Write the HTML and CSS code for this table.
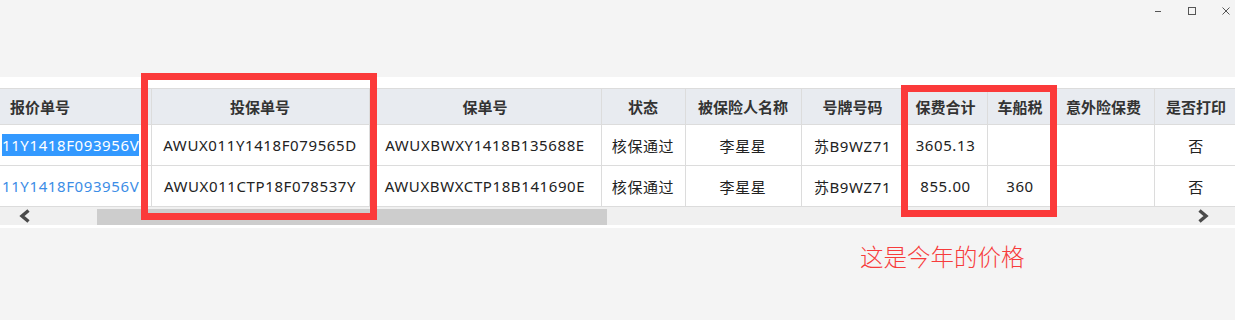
FILE: index.html
```html
<!DOCTYPE html>
<html lang="zh-CN">
<head>
    <meta charset="UTF-8">
    <title>保单查询</title>
    <link rel="stylesheet" href="styles.css">
</head>
<body>
    <!-- 窗口按钮 -->
    <div class="title-bar">
        <span class="win-btn">
            <svg width="10" height="10" viewBox="0 0 10 10"><line x1="2" y1="5.5" x2="8" y2="5.5" stroke="#555" stroke-width="1"/></svg>
        </span>
        <span class="win-btn">
            <svg width="10" height="10" viewBox="0 0 10 10"><rect x="1.5" y="1.5" width="7" height="7" fill="none" stroke="#555" stroke-width="1"/></svg>
        </span>
        <span class="win-btn">
            <svg width="10" height="10" viewBox="0 0 10 10"><path d="M1.5 1.5 L8.5 8.5 M8.5 1.5 L1.5 8.5" stroke="#555" stroke-width="1"/></svg>
        </span>
    </div>

    <!-- 表格区域 -->
    <div class="panel">
        <div class="grid-wrap">
            <table class="grid">
                <colgroup>
                    <col style="width:151px">
                    <col style="width:218px">
                    <col style="width:232px">
                    <col style="width:84px">
                    <col style="width:116px">
                    <col style="width:103px">
                    <col style="width:83px">
                    <col style="width:66px">
                    <col style="width:101px">
                    <col style="width:84px">
                </colgroup>
                <thead>
                    <tr>
                        <th class="left">报价单号</th>
                        <th>投保单号</th>
                        <th>保单号</th>
                        <th>状态</th>
                        <th>被保险人名称</th>
                        <th>号牌号码</th>
                        <th>保费合计</th>
                        <th>车船税</th>
                        <th>意外险保费</th>
                        <th>是否打印</th>
                    </tr>
                </thead>
                <tbody>
                    <tr>
                        <td class="left link"><span class="selected">11Y1418F093956V</span></td>
                        <td>AWUX011Y1418F079565D</td>
                        <td>AWUXBWXY1418B135688E</td>
                        <td>核保通过</td>
                        <td>李星星</td>
                        <td>苏B9WZ71</td>
                        <td>3605.13</td>
                        <td></td>
                        <td></td>
                        <td>否</td>
                    </tr>
                    <tr>
                        <td class="left link">11Y1418F093956V</td>
                        <td>AWUX011CTP18F078537Y</td>
                        <td>AWUXBWXCTP18B141690E</td>
                        <td>核保通过</td>
                        <td>李星星</td>
                        <td>苏B9WZ71</td>
                        <td>855.00</td>
                        <td>360</td>
                        <td></td>
                        <td>否</td>
                    </tr>
                </tbody>
            </table>
            <!-- 横向滚动条 -->
            <div class="hscroll">
                <span class="arrow arrow-left">
                    <svg width="14" height="14" viewBox="0 0 14 14"><path d="M10.5 1.5 L4 7 L10.5 12.5" fill="none" stroke="#4a4a4a" stroke-width="3.4"/></svg>
                </span>
                <div class="track"><div class="thumb"></div></div>
                <span class="arrow arrow-right">
                    <svg width="14" height="14" viewBox="0 0 14 14"><path d="M3.5 1.5 L10 7 L3.5 12.5" fill="none" stroke="#4a4a4a" stroke-width="3.4"/></svg>
                </span>
            </div>
        </div>
    </div>

    <p class="note">这是今年的价格</p>

    <!-- 标注框 -->
    <div class="mark mark-policy"></div>
    <div class="mark mark-fee"></div>
</body>
</html>
```

FILE: styles.css
```css
body {
    margin: 0;
    background-color: #f4f4f4;
    font-family: "Noto Sans", "Noto Sans CJK SC", sans-serif;
    overflow: hidden;
}
.title-bar {
    height: 76px;
    display: flex;
    justify-content: flex-end;
    align-items: flex-start;
    margin-right: -8px;
    padding-top: 1px;
}
.win-btn {
    width: 34px;
    height: 20px;
    display: flex;
    align-items: center;
    justify-content: center;
}
.panel {
    background-color: #fff;
    padding: 11px 0 3px 0;
}
.grid-wrap {
    width: 1235px;
    overflow: hidden;
}
.grid {
    table-layout: fixed;
    border-collapse: collapse;
    width: 1238px;
    font-size: 15px;
    letter-spacing: 0.6px;
    color: #222;
}
.grid th, .grid td {
    border: 1px solid #dcdcdc;
    text-align: center;
    white-space: nowrap;
    overflow: hidden;
    padding: 0;
}
.grid th {
    background-color: #e8ebf0;
    height: 35px;
    font-weight: bold;
    letter-spacing: 0;
    color: #333;
}
.grid td {
    height: 40px;
}
.grid tr > :first-child {
    border-left: none;
}
.grid th.left {
    text-align: left;
    padding-left: 10px;
}
.grid td.left {
    text-align: left;
    padding-left: 2px;
}
.link {
    color: #3c8de6;
}
.selected {
    background-color: #3399ff;
    color: #fff;
    padding: 1px 0;
}
.hscroll {
    display: flex;
    align-items: stretch;
    height: 18px;
    background-color: #f0f0f0;
}
.arrow {
    display: flex;
    align-items: center;
    justify-content: center;
}
.arrow-left {
    width: 50px;
}
.arrow-right {
    width: 64px;
}
.track {
    flex: 1;
    padding-top: 2px;
}
.thumb {
    width: 510px;
    margin-left: 47px;
    height: 16px;
    background-color: #cdcdcd;
}
.note {
    margin: 11px 0 0 860px;
    font-family: "Noto Sans CJK SC", sans-serif;
    font-size: 23.5px;
    font-weight: 300;
    color: #f73c3c;
}
.mark {
    position: absolute;
    border: 7px solid #fb3a3a;
    box-sizing: border-box;
}
.mark-policy {
    left: 141px;
    top: 73px;
    width: 236px;
    height: 147px;
}
.mark-fee {
    left: 901px;
    top: 85px;
    width: 156px;
    height: 132px;
}
```
